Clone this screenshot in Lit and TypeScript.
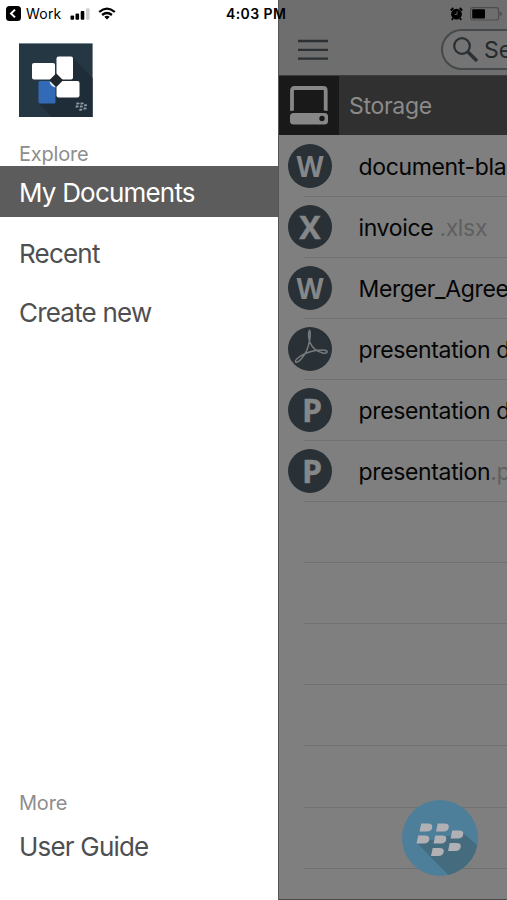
import { LitElement, html, css, svg } from "lit";
import { customElement } from "lit/decorators.js";

interface FileRow {
  kind: string;
  name: string;
  ext?: string;
}

const files: FileRow[] = [
  { kind: "W", name: "document-blank" },
  { kind: "X", name: "invoice", ext: " .xlsx" },
  { kind: "W", name: "Merger_Agreement" },
  { kind: "pdf", name: "presentation demo" },
  { kind: "P", name: "presentation demo" },
  { kind: "P", name: "presentation", ext: ".pptx" },
];
const emptyRows = [0, 1, 2, 3, 4, 5];

const dotOrigins = [[0, 0], [16.5, 0], [31, 7], [-3, 12], [14, 12], [28.5, 19.5], [11.5, 24.5]];
const dots = () => dotOrigins.map(
  ([x, y]) => svg`<path transform="translate(${x} ${y})" d="M1.700 0H8.500q4.300 0 4.300 3Q12.800 8 7 8H0z"/>`
);

@customElement("status-bar")
class StatusBar extends LitElement {
  static styles = css`
    :host { display: grid; grid-template-columns: 226px 224px 1fr; height: 27px; align-items: center; color: #000; }
    .left { display: flex; align-items: center; padding-left: 6px; font-size: 14px; letter-spacing: 0.2px; }
    .work { margin: 0 9px 0 5px; }
    .wifi { margin-left: 7px; }
    .time { font-size: 14px; font-weight: 600; letter-spacing: 0.4px; white-space: nowrap; }
    svg { display: block; }
    .right { display: flex; align-items: center; gap: 7px; }
  `;
  render() {
    return html`
      <div class="left">
        <svg width="15" height="15" viewBox="0 0 15 15"><rect width="15" height="15" rx="3.5"/><path d="M9 3.6L5 7.5l4 3.9" fill="none" stroke="#fff" stroke-width="2"/></svg>
        <span class="work">Work</span>
        <svg width="21" height="12" viewBox="0 0 21 12"><rect x="0.5" y="7.5" width="3.6" height="4.3" rx="1"/><rect x="5.5" y="5.6" width="3.6" height="6.2" rx="1"/><rect x="10.7" y="3" width="3.6" height="8.8" rx="1"/><rect x="16" y="0.3" width="3.6" height="11.5" rx="1" fill="#cfcfcf"/></svg>
        <svg class="wifi" width="18" height="13" viewBox="0 0 18 13"><g fill="none" stroke="#000" stroke-width="2.3"><path d="M1.2 5Q9-1.7 16.8 5"/><path d="M4.1 8Q9 4.1 13.9 8"/></g><path d="M6.3 9.8Q9 7.8 11.7 9.8L9 12.6z"/></svg>
      </div>
      <span class="time">4:03 PM</span>
      <div class="right">
        <svg width="13" height="14" viewBox="0 0 13 14"><circle cx="6.5" cy="7.2" r="5.4"/><path d="M.8 3.5L3.3 1M9.7 1l2.500 2.500M3 11.300l-1.200 1.600M10 11.300l1.200 1.600" stroke="#000" stroke-width="1.8"/><path d="M7 4.500v3H4.500" fill="none" stroke="#666" stroke-width="0.9"/></svg>
        <svg width="32" height="14" viewBox="0 0 32 14"><rect x=".6" y=".6" width="28" height="12.4" rx="2.5" fill="none" stroke="#4c4c4c" stroke-width="1.1"/><rect x="2.2" y="2.2" width="12.8" height="9.3" rx="1"/><path d="M29.8 4.500q2 1 2 2.400t-2 2.400z" fill="#4c4c4c"/></svg>
      </div>`;
  }
}

@customElement("side-drawer")
class SideDrawer extends LitElement {
  static styles = css`
    :host { display: flex; flex-direction: column; box-sizing: border-box; background: #fff; border-right: 1px solid #555; padding-top: 43px; color: #4e4f50; }
    .logo { display: block; margin-left: 19px; }
    .caption { padding-left: 19px; font-size: 20px; line-height: 24px; color: #8e8e8e; letter-spacing: -0.2px; }
    .explore { margin-top: 25px; }
    .item { padding-left: 19px; font-size: 26px; line-height: 53px; height: 51px; letter-spacing: -0.8px; }
    .on { background: #5c5c5c; color: #fff; margin: 0 0 10px; }
    .recent { margin-bottom: 8px; }
    .more { margin-top: auto; }
    .guide { margin: 5px 0 29px; }
  `;
  render() {
    return html`
      <svg class="logo" width="74" height="74" viewBox="0 0 74 74">
        <rect width="73.6" height="73.6" y=".4" fill="#263744"/>
        <path d="M54 15L73.600 35V74H33L19 60 37 37z" fill="#1f2d39"/>
        <rect x="19.5" y="38" width="17" height="22.5" rx="1.5" fill="#326ab5"/>
        <g fill="#fff"><rect x="13" y="20" width="23" height="16.5" rx="2"/><rect x="37.5" y="13.5" width="16.5" height="23" rx="2"/><rect x="37.5" y="38" width="23" height="16.5" rx="2"/></g>
        <path d="M30.500 38.500h6v6q-5-1-6-6z" fill="#dce8f5"/>
        <rect x="32.3" y="32.3" width="9.8" height="9.8" rx="1" transform="rotate(45 37.2 37.2)" fill="#22272c"/>
        <g transform="translate(57.2 59.5) scale(.25)" fill="#8f9aa3">${dots()}</g>
      </svg>
      <div class="caption explore">Explore</div>
      <div class="item on">My Documents</div>
      <div class="item recent">Recent</div>
      <div class="item">Create new</div>
      <div class="caption more">More</div>
      <div class="item guide">User Guide</div>`;
  }
}

@customElement("file-pane")
class FilePane extends LitElement {
  static styles = css`
    :host { display: flex; flex-direction: column; overflow: hidden; background: #7f7f7f; box-sizing: border-box; border-bottom: 1px solid #4a4a4a; }
    .head { display: flex; justify-content: space-between; flex: none; box-sizing: border-box; height: 75px; padding: 29px 0 0 19px; background: #6e6e6e; }
    .menu { margin-top: 10px; }
    .search { display: flex; align-items: center; box-sizing: border-box; width: 66px; height: 41px; padding-left: 9px; gap: 5px; border: 2px solid #46494b; border-right: 0; border-radius: 21px 0 0 21px; background: #747474; font-size: 23px; color: #24292c; overflow: hidden; }
    .search svg { flex: none; }
    .storage { display: flex; flex: none; height: 60px; align-items: center; background: #303030; border-top: 1px solid #3c3c3c; box-sizing: border-box; color: #8b8b8b; font-size: 23px; letter-spacing: -0.3px; }
    .drive { display: flex; align-items: center; box-sizing: border-box; padding-left: 11px; width: 60px; height: 100%; background: #191919; margin-right: 10px; }
    .list { padding-top: 0.5px; }
    .row { display: flex; align-items: center; height: 61.1px; padding-left: 9.5px; box-sizing: border-box; white-space: nowrap; font-size: 23px; letter-spacing: -0.35px; color: #050505;
      background: linear-gradient(#6f7070, #6f7070) 25px 100% / 100% 1px no-repeat; }
    .badge { display: flex; flex: none; align-items: center; justify-content: center; width: 44px; height: 44px; border-radius: 50%; background: #293136; color: #858788; font: 700 32px/44px "Open Sans", sans-serif; letter-spacing: 0; margin: 0 26.5px 1px -0.5px; -webkit-text-stroke: 0.5px #858788; }
    .badge.W { font-size: 28px; -webkit-text-stroke: 0; }
    .badge.P { box-sizing: border-box; padding-left: 4px; }
    .name, .ext { padding-top: 1px; }
    .ext { color: #606060; white-space: pre; }
    svg { display: block; }
  `;
  render() {
    return html`
      <div class="head">
        <svg class="menu" width="30" height="22" viewBox="0 0 30 22"><path d="M0 2h30M0 10.800h30M0 19.600h30" stroke="#2a3034" stroke-width="2.3"/></svg>
        <div class="search">
          <svg width="27" height="27" viewBox="0 0 27 27" fill="none" stroke="#2a3034"><circle cx="10" cy="10" r="7.8" stroke-width="2.3"/><path d="M15.500 15.500L25 25" stroke-width="3.3"/></svg>
          <span>Search</span>
        </div>
      </div>
      <div class="storage">
        <div class="drive"><svg width="38" height="39" viewBox="0 0 38 39"><path d="M2 25V4.500Q2 2 4.500 2h28.700q2.500 0 2.500 2.500V25" fill="none" stroke="#878787" stroke-width="3.8"/><rect y="27" width="38" height="11.500" rx="3.500" fill="#878787"/><path d="M0 26.500q1-1.500 4-1.500h30q3 0 4 1.500" fill="none" stroke="#191919" stroke-width="1"/><circle cx="32" cy="32.500" r="2.700" fill="#191919"/></svg></div>
        <span>Storage</span>
      </div>
      <div class="list">
        ${files.map((f) => html`<div class="row">
          <div class="badge ${f.kind}">${f.kind === "pdf"
            ? html`<svg width="44" height="44" viewBox="0 0 44 44" fill="none" stroke="#777b7d" stroke-width="1.5"><path d="M21.500 3.500c-2 3-.8 8 .5 12 2.500 6 8.500 9.500 13 10.500 5 .7 5.500-2.300 1.500-2.800-5-.5-13 1-18.500 3-5 2-11.500 6.500-10.500 8.800 2.500 2 8.300-5.500 11-11 2.500-5.500 5-17.500 3-20.500z"/></svg>`
            : f.kind}</div>
          <span class="name">${f.name}</span><span class="ext">${f.ext ?? ""}</span>
        </div>`)}
        ${emptyRows.map(() => html`<div class="row"></div>`)}
      </div>`;
  }
}

@customElement("app-root")
class AppRoot extends LitElement {
  static styles = css`
    :host { display: grid; grid-template-columns: 279px 1fr; position: relative; width: 507px; height: 900px; overflow: hidden; font-family: Inter, "Liberation Sans", sans-serif; }
    .status { position: absolute; inset: 0 0 auto 0; }
    .fab { position: absolute; right: 29px; bottom: 24px; }
    side-drawer, file-pane { min-width: 0; height: 900px; }
  `;
  render() {
    return html`
      <side-drawer></side-drawer>
      <file-pane></file-pane>
      <status-bar class="status"></status-bar>
      <svg class="fab" width="76" height="76" viewBox="0 0 76 76">
        <defs><clipPath id="disc"><circle cx="38" cy="38" r="38"/></clipPath></defs>
        <circle cx="38" cy="38" r="38" fill="#4d7f9b"/>
        <path d="M15 43L61 33L90 58V90H61z" fill="#456b7e" clip-path="url(#disc)"/>
        <g transform="translate(17.500 23.500)" fill="#b1b0b5">${dots()}</g>
      </svg>`;
  }
}
